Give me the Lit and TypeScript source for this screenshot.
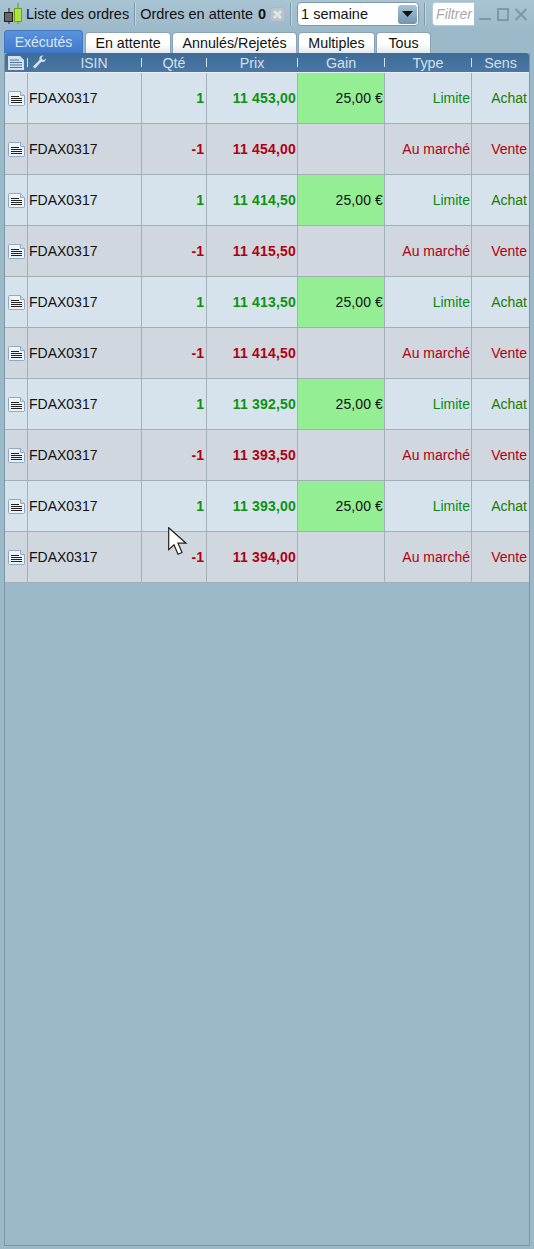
import { LitElement, html, css, svg } from "lit";
import { customElement } from "lit/decorators.js";

const rows = [
  ["1", "11 453,00"], ["-1", "11 454,00"], ["1", "11 414,50"], ["-1", "11 415,50"], ["1", "11 413,50"],
  ["-1", "11 414,50"], ["1", "11 392,50"], ["-1", "11 393,50"], ["1", "11 393,00"], ["-1", "11 394,00"],
];

const docIcon = html`<svg width="17" height="15" viewBox="0 0 17 15"><path d="M.5 1.5a1 1 0 0 1 1-1h11l4 4v9a1 1 0 0 1-1 1h-14a1 1 0 0 1-1-1z" fill="#eef3f7" stroke="#8fa9c4"/><path d="M12.5.5v4h4" fill="#cfdce8" stroke="#8fa9c4"/><path d="M3 5.500h8M3 7.500h11M3 9.500h11M3 11.500h11" stroke="#222" stroke-width="1.200"/></svg>`;

@customElement("app-root")
export class AppRoot extends LitElement {
  static styles = css`
    :host { display: block; width: 534px; height: 1249px; overflow: hidden; position: relative; background: #9cb9ca; font-family: "Liberation Sans", Arial, sans-serif; font-size: 14px; color: #111; }
    .frame { box-sizing: border-box; height: 1249px; padding: 0 4px 3px 4px; display: flex; flex-direction: column; background: linear-gradient(#a9c4d3 0, #9cb9ca 30px); }
    .toolbar { height: 28px; display: flex; align-items: center; white-space: nowrap; flex: none; font-size: 14.500px; }
    .logo { margin-left: -1px; margin-right: 2px; flex: none; }
    .sep { width: 1px; height: 22px; background: #7f98a8; margin: 0 5px; box-shadow: 1px 0 0 #c3d5df; flex: none; }
    .count { font-weight: bold; margin-left: 5px; }
    .xbtn { margin-left: 4px; flex: none; }
    .select { box-sizing: border-box; width: 122px; height: 24px; background: #fff; border: 1px solid #7f98a8; border-radius: 4px; display: flex; align-items: center; justify-content: space-between; padding: 0 1px 0 3px; margin-left: 1px; flex: none; }
    .arrow { width: 19px; height: 19px; border-radius: 3px; background: linear-gradient(#a8c3d3, #6f95ad); display: flex; align-items: center; justify-content: center; }
    .filter { box-sizing: border-box; width: 42px; height: 24px; background: #fff; border: 1px solid #b9cbd6; border-right: none; border-radius: 4px 0 0 4px; color: #a9a9a9; font-style: italic; font-size: 14px; padding: 3px 0 0 3px; overflow: hidden; flex: none; margin-left: 2px; }
    .winbtns { display: flex; align-items: center; margin-left: 5px; gap: 6px; flex: none; }
    .tabs { display: flex; gap: 1px; height: 24px; margin-top: 1px; flex: none; font-size: 14.300px; }
    .tab { box-sizing: border-box; margin-top: 3px; height: 21px; background: linear-gradient(#fff 55%, #e3e8ec); border: 1px solid #88a3b4; border-bottom: none; border-radius: 4px 4px 0 0; display: flex; align-items: center; justify-content: center; color: #111; }
    .tab.on { margin-top: 1px; height: 23px; margin-right: 1px; background: linear-gradient(#5b92de, #3f78c9); color: #dbe8f6; border-color: #3f78c9; font-size: 14px; }
    .t1 { width: 79px; } .t2 { width: 86px; } .t3 { width: 125px; } .t4 { width: 77px; } .t5 { width: 55px; }
    .table { flex: none; border-left: 1px solid #7a97a7; border-right: 1px solid #7a97a7; }
    .row, .head { display: grid; grid-template-columns: 22px 114px 65px 91px 87px 87px 58px; }
    .head { height: 20px; background: linear-gradient(#3e6c99, #4a77a3); color: #d5e0ea; border-bottom: 1px solid #e8eef2; box-sizing: border-box; border-radius: 3px 3px 0 0; }
    .hc { display: flex; align-items: center; justify-content: center; position: relative; font-size: 14.300px; padding-left: 1px; }
    .hc.s::before { content: ""; position: absolute; left: 0; top: 5px; height: 9px; width: 1px; background: #d5e0ea; }
    .hc.first { justify-content: flex-start; padding-left: 3px; }
    .hc.isinh { padding-left: 20px; font-size: 14px; }
    .wrench { position: absolute; left: 5px; top: 2px; }
    .row { height: 51px; box-sizing: border-box; border-bottom: 1px solid #a3b0ba; background: #d7e3ec; }
    .row.alt { background: #d0d7df; }
    .c { display: flex; align-items: center; justify-content: flex-end; padding: 0 1px 0 0; border-left: 1px solid #a3b0ba; white-space: nowrap; box-sizing: border-box; height: 50px; }
    .c:first-child { border-left: none; justify-content: flex-start; padding-left: 3px; padding-right: 0; }
    .isin { justify-content: flex-start; padding-left: 1px; }
    .b { font-weight: bold; }
    .qty { padding-right: 2px; }
    .price { letter-spacing: .2px; }
    .g { color: #0b930b; }
    .r { color: #b00012; }
    .gt { color: #0a8a0a; }
    .rt { color: #b00012; }
    .dg { color: #1a7a0a; }
    .gain { background: #94ee94; }
    .gainv { letter-spacing: .1px; }
    .sens { padding-right: 2px; }
    .fill { flex: 1; border-right: 1px solid #7a97a7; border-bottom: 1px solid #7a97a7; border-left: 1px solid #7a97a7; background: #9cb9ca; }
    .cursor { position: absolute; left: 168px; top: 527px; }
  `;

  render() {
    return html`
      <div class="frame">
        <div class="toolbar">
          <svg class="logo" width="21" height="24" viewBox="0 0 21 24">
            <path d="M6 6v16" stroke="#222"/><rect x="1.500" y="10.500" width="8" height="9" fill="#666" stroke="#222"/>
            <path d="M15 1v21" stroke="#5d9d10"/><rect x="11.500" y="6.500" width="7" height="13" fill="#a8e640" stroke="#6aa416"/>
          </svg>
          <span>Liste des ordres</span>
          <span class="sep"></span>
          <span>Ordres en attente</span><span class="count">0</span>
          <svg class="xbtn" width="15" height="15" viewBox="0 0 15 15"><rect x=".5" y=".5" width="14" height="14" rx="2" fill="#b8c4cb" stroke="#a9b9c3"/><path d="M4 4l7 7M11 4l-7 7" stroke="#dfe4e7" stroke-width="3"/></svg>
          <span class="sep"></span>
          <div class="select"><span>1 semaine</span><span class="arrow"><svg width="11" height="6" viewBox="0 0 11 6"><path d="M0 0h11L5.500 6z" fill="#111"/></svg></span></div>
          <span class="sep"></span>
          <div class="filter">Filtrer</div>
          <div class="winbtns">
            <svg width="12" height="13" viewBox="0 0 12 13"><path d="M0 11h12" stroke="#7d98a8" stroke-width="2"/></svg>
            <svg width="12" height="13" viewBox="0 0 12 13"><rect x="1" y="1" width="10" height="11" fill="none" stroke="#7d98a8" stroke-width="2"/></svg>
            <svg width="12" height="13" viewBox="0 0 12 13"><path d="M.5 1l11 11M11.500 1L.5 12" stroke="#7d98a8" stroke-width="2.200"/></svg>
          </div>
        </div>
        <div class="tabs">
          <div class="tab on t1">Exécutés</div>
          <div class="tab t2">En attente</div>
          <div class="tab t3">Annulés/Rejetés</div>
          <div class="tab t4">Multiples</div>
          <div class="tab t5">Tous</div>
        </div>
        <div class="table">
          <div class="head">
            <div class="hc first">${svg`<svg width="17" height="14" viewBox="0 0 17 14"><path d="M0 0h12l4 4v10H0z" fill="#d5e0ea"/><path d="M2 4h9M2 6.500h12M2 9h12M2 11.500h12" stroke="#4a77a3"/></svg>`}</div>
            <div class="hc s isinh">
              <svg class="wrench" width="15" height="15" viewBox="0 0 15 15"><path d="M14 3.500a3.500 3.500 0 0 1-4.700 3.300L3.500 13a1.500 1.500 0 0 1-2-2l6-6A3.500 3.500 0 0 1 11.500.5L9.500 2.500l.5 2 2 .5z" fill="#d5e0ea"/></svg>
              ISIN
            </div>
            <div class="hc s">Qté</div>
            <div class="hc s">Prix</div>
            <div class="hc s">Gain</div>
            <div class="hc s">Type</div>
            <div class="hc s">Sens</div>
          </div>
          ${rows.map(([q, p], i) => {
            const buy = i % 2 === 0;
            return html`<div class="row ${buy ? "" : "alt"}">
              <div class="c">${docIcon}</div>
              <div class="c isin">FDAX0317</div>
              <div class="c b qty ${buy ? "g" : "r"}">${q}</div>
              <div class="c b price ${buy ? "g" : "r"}">${p}</div>
              <div class="c ${buy ? "gain gainv" : ""}">${buy ? "25,00 €" : ""}</div>
              <div class="c ${buy ? "gt" : "rt"}">${buy ? "Limite" : "Au marché"}</div>
              <div class="c sens ${buy ? "dg" : "rt"}">${buy ? "Achat" : "Vente"}</div>
            </div>`;
          })}
        </div>
        <div class="fill"></div>
      </div>
      <svg class="cursor" width="21" height="28" viewBox="0 0 21 28"><path d="M.7.7v22l5.300-5 4 9.500 4-1.700-4-9.300h8z" fill="#fff" stroke="#222" stroke-width="1.200"/></svg>
    `;
  }
}
